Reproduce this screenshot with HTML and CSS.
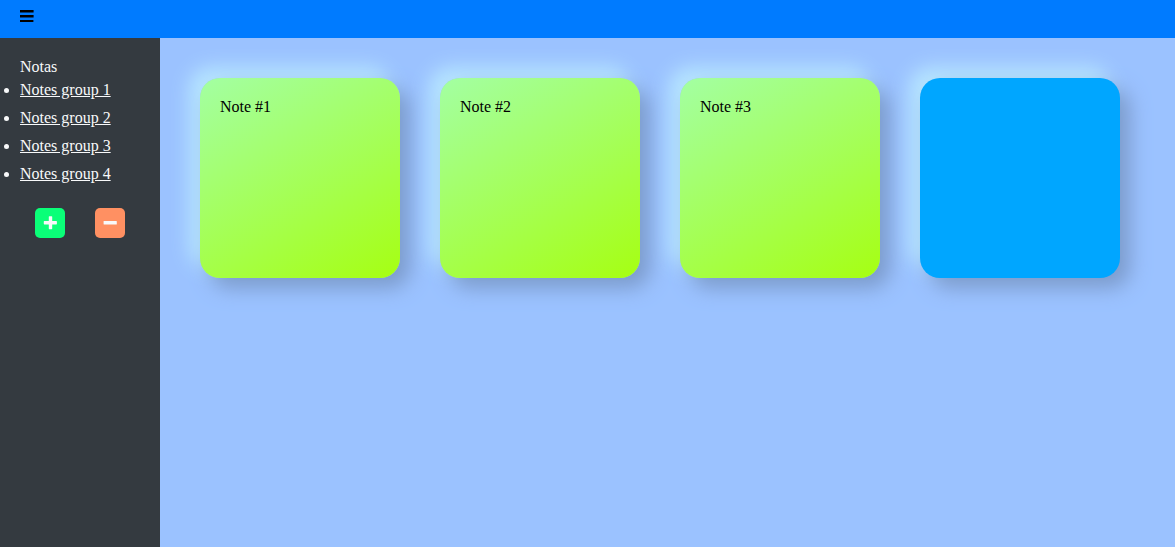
FILE: index.html
```html
<!DOCTYPE html>
<html lang="en">
<head>
<meta charset="utf-8">
<meta name="viewport" content="width=device-width, initial-scale=1">
<title>Notas</title>
<link rel="stylesheet" href="styles.css">
</head>
<body class="page">
  <header class="topbar">
    <button class="menu-button" type="button" aria-label="Toggle menu">
      <svg class="icon" viewBox="0 0 14 16" aria-hidden="true"><path d="M0 2h13.6v2.6H0zM0 7h13.6v2.4H0zM0 12h13.4v2.1H0z"/></svg>
    </button>
  </header>
  <div class="layout">
    <nav class="sidebar">
      <div>Notas</div>
      <ul class="groups">
        <li class="group"><a class="group-link" href="#group-1">Notes group 1</a></li>
        <li class="group"><a class="group-link" href="#group-2">Notes group 2</a></li>
        <li class="group"><a class="group-link" href="#group-3">Notes group 3</a></li>
        <li class="group"><a class="group-link" href="#group-4">Notes group 4</a></li>
      </ul>
      <div class="actions">
        <button class="action action-add" type="button" aria-label="Add group">
          <svg class="icon" viewBox="0 0 14 16" aria-hidden="true"><path d="M6.4 1.2h2.2q.6 0 .6.6v4.2h4.1q.6 0 .6.6v2.2q0 .6-.6.6H9.200v4.200q0 .6-.6.6H6.400q-.6 0-.6-.6V9.400H1.400q-.6 0-.6-.6V6.600q0-.6.6-.6h4.400V1.800q0-.6.6-.6z"/></svg>
        </button>
        <button class="action action-remove" type="button" aria-label="Remove group">
          <svg class="icon" viewBox="0 0 14 16" aria-hidden="true"><path d="M1.200 6h12q.6 0 .6.6v2.400q0 .6-.6.6h-12q-.6 0-.6-.6V6.600q0-.6.6-.6z"/></svg>
        </button>
      </div>
    </nav>
    <main class="notes">
      <article class="card note">Note #1</article>
      <article class="card note">Note #2</article>
      <article class="card note">Note #3</article>
      <button class="card new-note" type="button" aria-label="New note"></button>
    </main>
  </div>
</body>
</html>
```

FILE: styles.css
```css
* {
  box-sizing: border-box;
}

.page {
  margin: 0;
  min-height: 100vh;
  display: flex;
  flex-direction: column;
  font-family: "Liberation Serif", "Times New Roman", serif;
  font-size: 16px;
  line-height: 18px;
  color: #000;
}

.topbar {
  display: flex;
  padding: 8px 20px 14px;
  background: #007bff;
}

.menu-button {
  display: flex;
  padding: 0;
  border: 0;
  background: none;
  color: #000;
  cursor: pointer;
}

.icon {
  display: block;
  width: 14px;
  height: 16px;
  fill: currentColor;
}

.layout {
  flex: 1;
  display: flex;
}

.sidebar {
  flex: 0 0 160px;
  padding: 20px;
  background: #343a40;
  color: #f8f9fa;
}

.groups {
  margin: 0 0 20px;
  padding: 0;
}

.group {
  padding: 5px 0;
}

.group-link {
  color: inherit;
}

.actions {
  display: flex;
  justify-content: space-around;
}

.action {
  display: flex;
  align-items: center;
  justify-content: center;
  width: 30px;
  height: 30px;
  padding: 0;
  border: 0;
  border-radius: 5px;
  color: #f8f9fa;
  cursor: pointer;
}

.action-add {
  background: #0aff78;
}

.action-remove {
  background: #ff9062;
}

.notes {
  flex: 1;
  display: flex;
  flex-wrap: wrap;
  align-content: flex-start;
  gap: 40px;
  padding: 40px;
  background: #9bc2ff;
}

.card {
  width: 200px;
  height: 200px;
  padding: 20px;
  border: 0;
  border-radius: 20px;
  box-shadow: 10px 10px 20px #7c9bcc, -10px -10px 20px #bae9ff;
}

.note {
  background: linear-gradient(150deg, #a3ffa3, #a6ff12);
}

.new-note {
  background: #00a6ff;
  cursor: pointer;
}
```
